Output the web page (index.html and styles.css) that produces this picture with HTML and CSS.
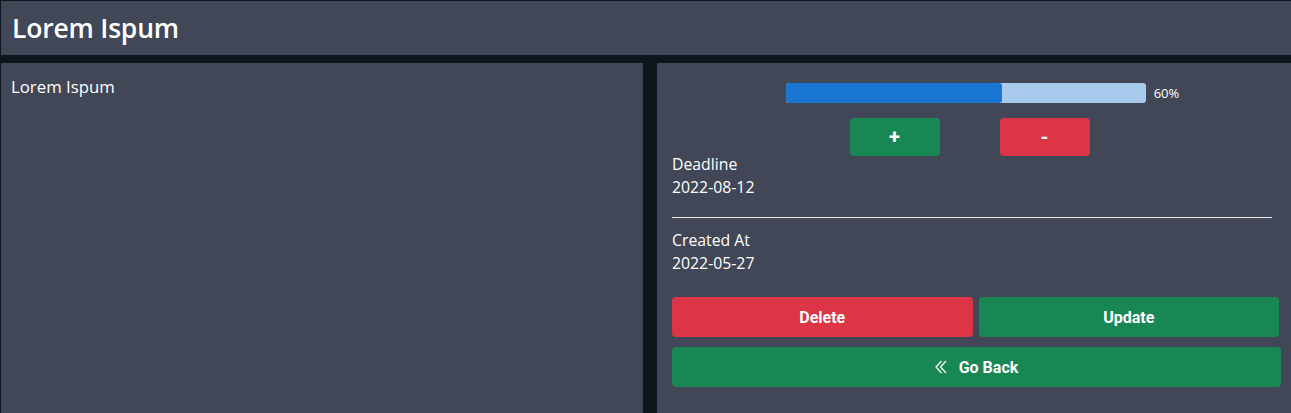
FILE: index.html
```html
<!DOCTYPE html>
<html>
<head>
<meta charset="utf-8">
<link rel="stylesheet" href="styles.css">
</head>
<body>
<div class="page">
  <header class="topbar"><h1 class="title">Lorem Ispum</h1></header>
  <main class="main">
    <section class="panel left">
      <p class="desc">Lorem Ispum</p>
    </section>
    <section class="panel right">
      <div class="progress-row">
        <div class="track"><div class="fill" style="width:60%"></div></div>
        <span class="pct">60%</span>
      </div>
      <div class="step-row">
        <button class="btn step green">+</button>
        <button class="btn step red">-</button>
      </div>
      <div class="info first">
        <div>Deadline</div>
        <div>2022-08-12</div>
      </div>
      <hr class="rule">
      <div class="info">
        <div>Created At</div>
        <div>2022-05-27</div>
      </div>
      <div class="action-row">
        <button class="btn action red">Delete</button>
        <button class="btn action green">Update</button>
      </div>
      <button class="btn back green">
        <svg class="chev" width="12" height="14" viewBox="0 0 12 14" fill="none" stroke="#fff" stroke-width="1.2">
          <path d="M6.5 1 L1 7 L6.5 13"/>
          <path d="M11 1 L5.5 7 L11 13"/>
        </svg>
        <span>Go Back</span>
      </button>
    </section>
  </main>
</div>
</body>
</html>
```
FILE: styles.css
```css
html, body { margin: 0; padding: 0; }
body {
  background: #0e151b;
  font-family: "Open Sans", "Noto Sans", sans-serif;
  color: #fff;
  overflow: hidden;
}
.page { padding: 1px 0 0 1px; }
.topbar {
  background: #414756;
  height: 54px;
  display: flex;
  align-items: center;
  padding-left: 11px;
}
.title {
  margin: 0;
  font-size: 26.5px;
  font-weight: 600;
  letter-spacing: -0.2px;
}
.main {
  margin-top: 8px;
  display: flex;
  gap: 14px;
  height: 350px;
}
.panel { background: #414756; }
.left { width: 642px; padding: 14px 10px; box-sizing: border-box; }
.desc { margin: 0; font-size: 16.8px; line-height: 20px; }
.right {
  flex: 1;
  padding: 20px 10px 0 15px;
  display: flex;
  flex-direction: column;
}
.progress-row {
  display: flex;
  align-items: center;
  justify-content: center;
  gap: 8px;
  padding-left: 12px;
}
.track {
  width: 360px;
  height: 20px;
  background: #a8caed;
  border-radius: 3px;
  overflow: hidden;
}
.fill { height: 100%; background: #1976d2; border-radius: 3px; }
.pct { font-size: 13px; font-family: "Open Sans", sans-serif; }
.btn {
  border: none;
  color: #fff;
  font-family: Roboto, sans-serif;
  font-weight: 700;
  font-size: 16px;
  border-radius: 4px;
  padding: 0;
}
.green { background: #198754; }
.red { background: #dc3545; }
.step-row {
  display: flex;
  justify-content: center;
  gap: 60px;
  margin-top: 15px;
  padding-right: 14px;
}
.step { width: 90px; height: 38px; font-size: 20px; }
.info {
  font-size: 15.8px;
  line-height: 23px;
}
.info.first { margin-top: -3px; }
.rule {
  border: none;
  border-top: 1px solid #e8e8e8;
  margin: 18px 9px 11px 0;
}
.action-row {
  display: flex;
  gap: 6px;
  margin: 22px 2px 0 0;
}
.action { flex: 1; height: 40px; }
.back {
  margin-top: 10px;
  height: 40px;
  display: flex;
  align-items: center;
  justify-content: center;
  gap: 12px;
}
```
